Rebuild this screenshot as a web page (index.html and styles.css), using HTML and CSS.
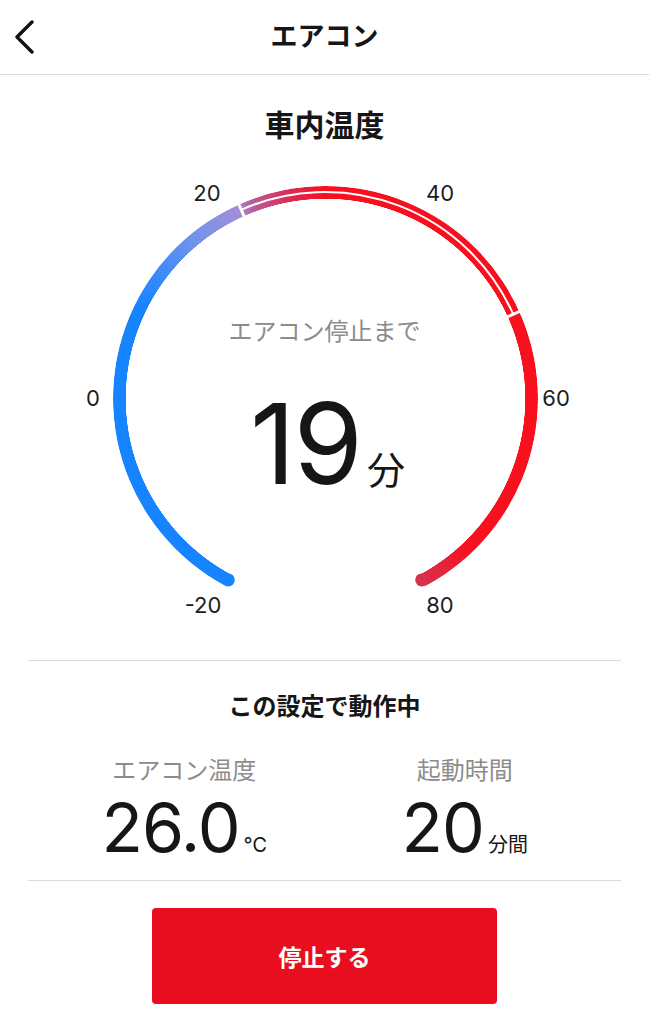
FILE: index.html
```html
<!DOCTYPE html>
<html lang="ja">
<head>
    <meta charset="UTF-8">
    <title>エアコン</title>
    <link rel="stylesheet" href="styles.css">
</head>
<body>
<header class="topbar">
    <a class="back" href="#">
        <svg width="24" height="34" viewBox="0 0 24 34"><polyline points="19,2 4,17 19,32" fill="none" stroke="#111" stroke-width="3.4" stroke-linecap="round" stroke-linejoin="round"/></svg>
    </a>
    <h1 class="title">エアコン</h1>
</header>

<main>
    <section class="gauge-section">
        <h2 class="section-title">車内温度</h2>
        <div class="gauge">
            <!--リング本体-->
            <div class="ring"></div>
            <!--キャップと設定範囲の線-->
            <svg class="ring-marks" width="649" height="519" viewBox="0 141 649 519">
                <circle cx="228.3" cy="579.9" r="6.5" fill="#1784ff"/>
                <circle cx="421.7" cy="579.9" r="6.5" fill="#d9304c"/>
                <path d="M241.2 209.8 A206 206 0 0 1 513.2 314.2" fill="none" stroke="#fff" stroke-width="2"/>
                <line x1="244.5" y1="217.1" x2="237.6" y2="201.6" stroke="#fff" stroke-width="3"/>
                <line x1="505.9" y1="317.5" x2="521.4" y2="310.6" stroke="#fff" stroke-width="3"/>
            </svg>
            <span class="tick tick-m20">-20</span>
            <span class="tick tick-0">0</span>
            <span class="tick tick-20">20</span>
            <span class="tick tick-40">40</span>
            <span class="tick tick-60">60</span>
            <span class="tick tick-80">80</span>

            <div class="remain">
                <p class="remain-label">エアコン停止まで</p>
                <p class="remain-value"><span class="remain-num">19</span><span class="remain-unit">分</span></p>
            </div>
        </div>
    </section>

    <section class="setting">
        <h3 class="setting-title">この設定で動作中</h3>
        <div class="stats">
            <div class="stat">
                <p class="stat-label">エアコン温度</p>
                <p class="stat-value"><span class="stat-num">26.0</span><span class="stat-unit">℃</span></p>
            </div>
            <div class="stat">
                <p class="stat-label">起動時間</p>
                <p class="stat-value"><span class="stat-num">20</span><span class="stat-unit">分間</span></p>
            </div>
        </div>
    </section>

    <div class="actions">
        <button class="stop-btn" type="button">停止する</button>
    </div>
</main>
</body>
</html>
```

FILE: styles.css
```css
* {
    margin: 0;
    padding: 0;
    box-sizing: border-box;
}

body {
    width: 649px;
    background: #fff;
    color: #161616;
    font-family: Inter, "Noto Sans CJK JP", sans-serif;
}

/* ヘッダー */
.topbar {
    height: 75px;
    border-bottom: 1px solid #d9d9d9;
    display: grid;
    grid-template-columns: 60px 1fr 60px;
    align-items: center;
}

.back {
    display: flex;
    padding-left: 13px;
}

.title {
    text-align: center;
    font-size: 27px;
    font-weight: 700;
    line-height: 32px;
}

/* 車内温度 */
.section-title {
    padding-top: 35px;
    text-align: center;
    font-size: 30px;
    font-weight: 700;
    line-height: 31px;
}

.gauge {
    position: relative;
    height: 519px;
    padding-top: 176px;
}

.ring {
    position: absolute;
    left: 112.5px;
    top: 44.5px;
    width: 425px;
    height: 425px;
    border-radius: 50%;
    background: conic-gradient(from 208deg,
        #1784ff 0deg,
        #1784ff 88deg,
        #3f8bfa 100deg,
        #7093ec 112deg,
        #a18fd8 127deg,
        #b85e9c 131deg,
        #dc2a55 142deg,
        #f8101e 152deg,
        #f8101e 288deg,
        #d9304c 304deg,
        transparent 304deg);
    -webkit-mask: radial-gradient(closest-side, transparent calc(100% - 13px), #000 calc(100% - 12.5px));
    mask: radial-gradient(closest-side, transparent calc(100% - 13px), #000 calc(100% - 12.5px));
}

.ring-marks {
    position: absolute;
    left: 0;
    top: 0;
}

.tick {
    position: absolute;
    transform: translate(-50%, -50%);
    font-size: 22px;
    line-height: 1;
    color: #1d1d1d;
}

.tick-m20 { left: 203px; top: 464px; }
.tick-0 { left: 93px; top: 257px; }
.tick-20 { left: 207px; top: 52px; }
.tick-40 { left: 440px; top: 52px; }
.tick-60 { left: 556px; top: 257px; }
.tick-80 { left: 440px; top: 464px; }

.remain {
    position: relative;
    text-align: center;
}

.remain-label {
    font-size: 24px;
    line-height: 30px;
    color: #8c8c8c;
}

.remain-value {
    margin-top: 40px;
    padding-left: 6px;
    line-height: 1;
}

.remain-num {
    font-size: 112px;
    font-weight: 400;
    letter-spacing: -2px;
}

.remain-unit {
    font-size: 38px;
    margin-left: 6px;
}

/* 設定 */
.setting {
    margin: 0 28px;
    border-top: 1px solid #dcdcdc;
    border-bottom: 1px solid #dcdcdc;
    padding: 31px 0 0;
    height: 221px;
}

.setting-title {
    text-align: center;
    font-size: 24px;
    font-weight: 700;
    line-height: 30px;
}

.stats {
    display: grid;
    grid-template-columns: 1fr 1fr;
    margin: 34px 16px 0;
}

.stat {
    text-align: center;
}

.stat-label {
    font-size: 24px;
    line-height: 30px;
    color: #8c8c8c;
}

.stat-value {
    line-height: 1;
    margin-top: 7px;
}

.stat-num {
    font-size: 68px;
    letter-spacing: -1px;
}

.stat-unit {
    font-size: 20px;
    margin-left: 4px;
}

/* 停止ボタン */
.actions {
    display: flex;
    justify-content: center;
    padding-top: 27px;
}

.stop-btn {
    width: 345px;
    height: 96px;
    border: 0;
    border-radius: 4px;
    background: #e80e20;
    color: #fff;
    font-family: Inter, "Noto Sans CJK JP", sans-serif;
    font-size: 23px;
    font-weight: 700;
}
```
